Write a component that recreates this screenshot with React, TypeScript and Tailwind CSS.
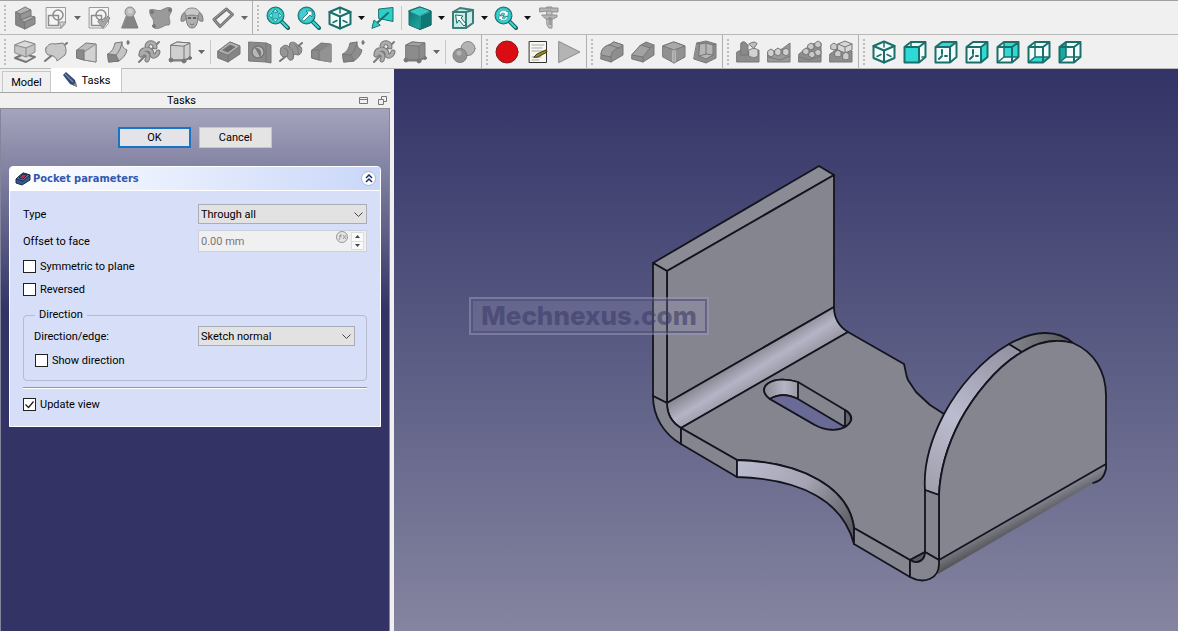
import type { ReactNode } from "react";
import clsx from "clsx";

/* ---------- icons ---------- */

interface IconProps {
  children: ReactNode;
  tone?: "gray" | "teal";
}

function Icon({ children, tone = "gray" }: IconProps) {
  return (
    <svg
      viewBox="0 0 24 24"
      className="h-6 w-6"
      fill={tone === "teal" ? "#2bcfca" : "#a2a2a2"}
      stroke={tone === "teal" ? "#1a6f6b" : "#777"}
      strokeWidth={1}
      strokeLinejoin="round"
      strokeLinecap="round"
      aria-hidden="true"
    >
      {children}
    </svg>
  );
}

const BodyIcon = () => (
  <Icon>
    <path d="m3 6 5 2v6l4 2v7l-9-4Z" fill="#868686" />
    <path d="m3 6 9-5 6 3-10 4Z" fill="#b2b2b2" />
    <path d="m8 8 10-4v6L8 14Z" fill="#959595" />
    <path d="m8 14 10-4 4 1-10 5Z" fill="#b2b2b2" />
    <path d="m12 16 10-5v7l-10 5Z" fill="#8f8f8f" />
  </Icon>
);

const SketchIcon = ({ check = false }: { check?: boolean }) => (
  <Icon>
    <path d="M2.500 1.500h19v16l-4 4.500h-15Z" fill="#f4f4f4" stroke="#9a9a9a" />
    <path d="M4.500 9.500h10v10h-10Z" fill="none" stroke="#8c8c8c" strokeWidth={1.500} />
    <circle cx="14" cy="9" r="5" fill="none" stroke="#8c8c8c" strokeWidth={1.500} />
    {check ? (
      <path d="m11 15 3-2 2 3 5-6 2 2-7 10Z" fill="#a6a6a6" stroke="#888" />
    ) : (
      <path d="M16 16h5l-4 6Z" fill="#d2d2d2" stroke="#999" />
    )}
  </Icon>
);

const AttachIcon = () => (
  <Icon>
    <path d="M9 9h6l5 13H4Z" fill="#858585" stroke="#7c7c7c" />
    <circle cx="12" cy="6" r="5" fill="#bababa" stroke="#8c8c8c" />
    <circle cx="12" cy="5" r="2.500" fill="#cfcfcf" stroke="none" />
  </Icon>
);

const BinderIcon = () => (
  <Icon>
    <path d="M1 4c4-2 7 2 12 0 3-2 6-3 9-2 2 4-2 6-2 9s2 5 0 8c-5-1-8 5-15 3-2-3 1-5-1-9C2 10 0 8 1 4Z" fill="#9a9a9a" stroke="#858585" />
    <circle cx="3" cy="6" r="1.500" fill="#7a7a7a" />
    <circle cx="21" cy="4" r="1.500" fill="#7a7a7a" />
    <circle cx="5" cy="20" r="1.500" fill="#7a7a7a" />
  </Icon>
);

const CloneIcon = () => (
  <Icon>
    <path d="M6 6C3 6 1 9 1 15c3 1 5-1 6-4M18 6c3 0 5 3 5 9-3 1-5-1-6-4" fill="#a2a2a2" />
    <path d="M6 9h12c0 6-1 13-6 13S6 15 6 9Z" fill="#b0b0b0" />
    <path d="M5 8c-1-4 3-6 7-6s8 2 7 6c-2 3-4 1-7 1S7 11 5 8Z" fill="#c9c9c9" stroke="#888" />
    <path d="M8.500 12h2M13.500 12h2" stroke="#444" strokeWidth={1.500} />
    <path d="m10 18 2 1 2-1" fill="none" />
  </Icon>
);

const PlaneIcon = () => (
  <Icon>
    <path d="M15.500 3 21.500 8.500 9 20.500 3 13.500Z" fill="#f2f2f2" stroke="#6f6f6f" strokeWidth={3} />
    <path d="M15.500 3 21.500 8.500 9 20.500 3 13.500Z" fill="none" stroke="#a4a4a4" />
  </Icon>
);

const PadIcon = () => (
  <Icon>
    <path d="m2 18 9-4 11 3-9 5Z" fill="#e2e2e2" stroke="#777" strokeWidth={2} />
    <path d="m2 5 10-4 10 3v8l-9 5-11-4Z" fill="#c4c4c4" stroke="#8a8a8a" />
    <path d="m2 5 11 3 9-4-10-3Z" fill="#dadada" stroke="#8a8a8a" />
    <path d="M13 8v9" stroke="#8a8a8a" />
  </Icon>
);

const RevolveIcon = ({ dark = false }: { dark?: boolean }) => (
  <Icon>
    <path d="M1 21 23 3" stroke="#777" strokeWidth={2} />
    {dark ? (
      <>
        <path d="M2 8c2-3 6-4 8-1l1-4c3-2 7 0 8 3l3 1c2 3 0 8-3 8l-4-1-1 5c-3 3-5 0-6-3l-3 1c-3 0-5-5-3-9Z" fill="#959595" />
        <path d="M5 8c4 1 5 4 3 8M10 7c4 2 5 6 4 11M16 5c3 2 4 6 3 9" fill="none" />
      </>
    ) : (
      <path d="M2 8c2-4 6-5 9-4l8-1c3 3 4 8 2 12l-8 6c-1-4-4-6-9-6-2-2-3-4-2-7Z" fill="#c9c9c9" stroke="#7c7c7c" />
    )}
  </Icon>
);

const LoftIcon = ({ dark = false }: { dark?: boolean }) => (
  <Icon>
    <path d="m2 10 9-7 10 1v18L9 20l-7-2Z" fill={dark ? "#868686" : "#bdbdbd"} />
    <path d="m9 12 12-8v18L9 20Z" fill={dark ? "#939393" : "#d2d2d2"} stroke="#8a8a8a" />
    <path d="M2 10h7v10l-7-2Z" fill="#8a8a8a" />
  </Icon>
);

const SweepIcon = ({ dark = false }: { dark?: boolean }) => (
  <Icon>
    <path d="M2 14c4-2 6-6 7-11l7-1c0 4 1 6 5 8-1 5-4 8-8 11l-10 1Z" fill={dark ? "#8d8d8d" : "#c4c4c4"} />
    <path d="m2 14 8 1 3 6-10 1Z" fill="#858585" />
    <path d="M10 15c3-3 5-7 6-13" fill="none" />
    <ellipse cx="22" cy="2.500" rx="1" ry="2" fill="#777" />
  </Icon>
);

const HelixIcon = () => (
  <Icon>
    <path d="M2 22 22 2" stroke="#7a7a7a" strokeWidth={2} />
    <path d="M4 15c4-4 9-1 6 5M4 15c-1-7 11-8 11-1 0 4 5 2 6-2M10 6c1-5 8-4 8 1" fill="none" stroke="#777" strokeWidth={5} />
    <path d="M4 15c4-4 9-1 6 5M4 15c-1-7 11-8 11-1 0 4 5 2 6-2M10 6c1-5 8-4 8 1" fill="none" stroke="#ababab" strokeWidth={3} />
  </Icon>
);

const PrimitiveIcon = ({ dark = false }: { dark?: boolean }) => (
  <Icon>
    <path d="m3 5 6-3 13 1v15l-6 3H3Z" fill={dark ? "#8c8c8c" : "#cfcfcf"} />
    <path d="m3 5 6-3 13 1-6 3Z" fill={dark ? "#a2a2a2" : "#dedede"} />
    <path d="M16 6v15" />
    <path d="M3 20h13l6-2" fill="none" strokeWidth={1.500} />
    <circle cx="3" cy="20" r="2" fill="#777" />
    <circle cx="16" cy="21" r="2" fill="#777" />
    <circle cx="22" cy="18" r="1.500" fill="#777" />
  </Icon>
);

const PocketIcon = () => (
  <Icon>
    <path d="m1 11 12-9 10 4v8L11 22 1 18Z" fill="#858585" />
    <path d="m1 11 12-9 10 4-12 9Z" fill="#b2b2b2" />
    <path d="m6 10 7-5 5 2-7 5Z" fill="#6d6d6d" />
    <path d="M11 15v7" />
  </Icon>
);

const HoleIcon = () => (
  <Icon>
    <path d="m1 2 17 1 5 2v18l-5-1-17-1Z" fill="#8a8a8a" />
    <path d="M18 3v19" />
    <circle cx="10" cy="12" r="6" fill="#b9b9b9" strokeWidth={1.500} />
    <path d="M7 8c5 0 7 4 5 9" fill="#777" />
  </Icon>
);

const BooleanIcon = () => (
  <Icon>
    <circle cx="16" cy="8.500" r="7" fill="#b3b3b3" stroke="#888" />
    <circle cx="8" cy="15.500" r="7" fill="#939393" stroke="#7f7f7f" />
    <circle cx="7" cy="13" r="2.500" fill="#b5b5b5" stroke="none" />
  </Icon>
);

const MacroEditIcon = () => (
  <Icon>
    <path d="M3.500 1.500h17v21h-17Z" fill="#f7f7f2" stroke="#333" />
    <path d="M6 5h12M6 8h10M6 11h12M6 17h9M6 20h7" fill="none" stroke="#a5a5a5" />
    <path d="m8 17 3-3 9-4 1 2-9 5Z" fill="#a18c1f" stroke="#3d3510" />
  </Icon>
);

const FilletIcon = () => (
  <Icon>
    <path d="M1 15c0-5 3-9 8-10l5-3 9 3v10l-12 7-10-3Z" fill="#8e8e8e" />
    <path d="M9 5c-5 1-8 5-8 10l10 2c0-5 3-8 8-9l4-3-9-3Z" fill="#a0a0a0" />
    <path d="M11 17v5M9 5l10 3" fill="none" />
  </Icon>
);

const ChamferIcon = () => (
  <Icon>
    <path d="m1 15 9-10 5-3 8 3v10l-11 7-11-3Z" fill="#8e8e8e" />
    <path d="m1 15 11 2 7-9-9-3Z" fill="#a3a3a3" />
    <path d="M12 17v5M19 8l4-3" fill="none" />
  </Icon>
);

const DraftIcon = () => (
  <Icon>
    <path d="m1 6 11-4 11 4v11l-11 6-11-6Z" fill="#919191" />
    <path d="m1 6 11 4 11-4-11-4Z" fill="#a9a9a9" />
    <path d="M12 11v10" stroke="#ddd" strokeWidth={3} />
    <path d="M12 10v13" />
  </Icon>
);

const ThicknessIcon = () => (
  <Icon>
    <path d="m4 3 9-2 10 3v14l-10 5-12-4Z" fill="#8d8d8d" />
    <path d="m7 4 6-1 7 2v10l-7 4-7-3Z" fill="#b5b5b5" />
    <path d="M13 3v11l-7 2M13 14l7 1M7 4 4 3M20 5l3-1" fill="none" />
  </Icon>
);

const PatternIcon = ({ kind }: { kind: "mirror" | "linear" | "polar" | "multi" }) => (
  <Icon>
    {kind === "mirror" && (
      <>
        <path d="M1 12 7 9l5 3 11-2v12H1Z" fill="#8c8c8c" />
        <path d="M5 3c3-3 5 0 7 2v10H5Z" fill="#8a8a8a" />
        <path d="M13 4c4-3 8-2 8 0l-3 4Z" fill="#bdbdbd" />
        <path d="M13 10c3-2 7-2 9 0v6c-3 2-6 2-9 0Z" fill="#d2d2d2" />
      </>
    )}
    {kind === "linear" && (
      <>
        <path d="m1 13 14-4 8-6v19H1Z" fill="#999" />
        <path d="m1 11 3-2 3 2v4l-3 2-3-2ZM8 10l3-2 3 2v4l-3 2-3-2ZM16 10l3-2 3 2v4l-3 2-3-2Z" fill="#d0d0d0" />
        <path d="m1 17 12 3 10-4" fill="none" />
      </>
    )}
    {kind === "polar" && (
      <>
        <path d="m1 14 13-10 9-1v19H1Z" fill="#8d8d8d" />
        <path d="m5 10 3-2 3 2v3l-3 2-3-2ZM10 5l3-2 3 2v3l-3 2-3-2ZM17 3l3-2 3 2v3l-3 2-3-2ZM17 11l3-2 3 2v3l-3 2-3-2ZM11 13l3-2 3 2v3l-3 2-3-2Z" fill="#c9c9c9" />
        <path d="m1 17 10 3 12-4" fill="none" />
      </>
    )}
    {kind === "multi" && (
      <>
        <path d="M1 14 8 9l15 2v11H1Z" fill="#8d8d8d" />
        <path d="m9 4 7-3 7 3v6l-7 3-7-3Z" fill="#d6d6d6" />
        <path d="m9 4 7 3 7-3M16 7v6" fill="none" />
        <path d="m2 5 3-2 3 2v4l-3 1-3-1ZM6 12l3-2 3 2v4l-3 1-3-1ZM14 14l3-2 3 2v5l-3 1-3-1Z" fill="#cbcbcb" />
      </>
    )}
  </Icon>
);

const Lens = ({ children }: { children: ReactNode }) => (
  <Icon tone="teal">
    <path d="m15 15 7 7" stroke="#12615d" strokeWidth={4} />
    <path d="m15.500 15.500 6 6" stroke="#35d8d3" strokeWidth={2} />
    <circle cx="9.500" cy="9.500" r="7.500" fill="#37cfd0" stroke="#1a6f6b" strokeWidth={3} />
    <circle cx="9.500" cy="9.500" r="7.500" fill="#43cdd2" stroke="#25c4bf" strokeWidth={1} />
    {children}
  </Icon>
);

const FitAllIcon = () => (
  <Lens>
    <path d="M9.500 3.500 12 6H7ZM9.500 15.500 12 13H7ZM3.500 9.500 6 7v5ZM15.500 9.500 13 7v5Z" fill="#fff" strokeWidth={0.800} />
  </Lens>
);

const FitSelectionIcon = () => (
  <Lens>
    <path d="m5 13 6-6-2-2h6v6l-2-2-6 6Z" fill="#fff" strokeWidth={0.800} />
  </Lens>
);

const SyncViewIcon = () => (
  <Lens>
    <path d="M5 8c1-4 6-5 8-2l1-1v5H9l2-2c-2-2-4-1-4 1ZM14 11c-1 4-6 5-8 2l-1 1v-4h5l-2 2c2 2 3 1 4-1Z" fill="#fff" strokeWidth={0.500} />
  </Lens>
);

const IsoIcon = () => (
  <Icon tone="teal">
    <path d="M12 1.500 22.500 6v12L12 22.500 1.500 18V6Z" fill="#f4fbfb" strokeWidth={2} />
    <path d="M1.500 6 12 10.500 22.500 6M12 10.500v12" fill="none" strokeWidth={2} />
    <path d="M12 2v5M5 16.500l4-2M19 16.500l-4-2" fill="none" strokeWidth={1.500} />
  </Icon>
);

const AlignIcon = () => (
  <Icon tone="teal">
    <path d="m8 3 14-1.500v14L8 12.500Z" />
    <path d="M17 7 6 17" strokeWidth={2} />
    <path d="m1 22 2-8 6 5Z" />
  </Icon>
);

const DrawStyleIcon = () => (
  <Icon tone="teal">
    <defs>
      <linearGradient id="cube" x1="0" x2="1" y1="0" y2="1">
        <stop offset="0" stopColor="#0c6b69" />
        <stop offset="1" stopColor="#2cc4be" />
      </linearGradient>
    </defs>
    <path d="M12 1 23 5v14l-11 4.500L1 19V5Z" fill="url(#cube)" />
    <path d="m1 5 11-4 11 4-11 5Z" fill="#38c9c4" />
    <path d="m12 10 11-5v14l-11 4.500Z" fill="#0f7876" />
    <path d="m3 6 9 4 9-4M12 10v12" fill="none" stroke="#4fe0da" strokeWidth={0.500} />
  </Icon>
);

const SelectBoxIcon = () => (
  <Icon tone="teal">
    <path d="m2 6 7-4 13 2v13l-7 5H2Z" fill="#c7ecea" stroke="#3d7d7a" strokeWidth={2} />
    <path d="M2 6h13v16M15 6l7-2" fill="none" stroke="#3d7d7a" strokeWidth={2} />
    <path d="m5 9 7 1-2 2 5 6-2 2-5-6-2 3Z" fill="#fff" />
  </Icon>
);

const CaliperIcon = () => (
  <Icon>
    <path d="M10 1h5v21h-3l-2-3Z" fill="#c2c2c2" stroke="#8e8e8e" />
    <path d="M3 2h18v4h-5l-2-1h-4L3 6ZM5 9h15v2l-4 2H9Z" fill="#b5b5b5" stroke="#8e8e8e" />
    <path d="M12 12h2M12 14h2M12 16h2M12 18h2" stroke="#777" />
  </Icon>
);

const FACES = {
  front: "M1.500 7h14.500v15.500H1.500Z",
  top: "M1.500 7 8 2h14.500L16 7Z",
  right: "M16 7l6.500-5v15L16 22.500Z",
  rear: "M8 2h14.500v15H8Z",
  bottom: "M1.500 22.500 8 17h14.500L16 22.500Z",
  left: "M1.500 7 8 2v15l-6.500 5.500Z",
};

const ViewIcon = ({ face }: { face: keyof typeof FACES }) => (
  <Icon tone="teal">
    <path d="M1.500 7 8 2h14.500v15L16 22.500H1.500Z" fill="#f2fbfb" stroke="none" />
    <path d={FACES[face]} fill={face === "left" ? "#17a8a4" : "#2fd9d6"} stroke="none" />
    {face === "front" && <path d="M8 2v5M22 17l-3 0" fill="none" strokeWidth={1.500} />}
    {(face === "top" || face === "right") && (
      <path d="M8 10v4M5 19l3-3M13 16h-2" fill="none" strokeWidth={2} />
    )}
    {face !== "front" && face !== "top" && face !== "right" && (
      <path d="M8 2v15h14M8 17l-6 5" fill="none" strokeWidth={1.500} />
    )}
    <path d="M1.500 7 8 2h14.500v15L16 22.500H1.500ZM1.500 7H16v15.500M16 7l6.500-5" fill="none" strokeWidth={2} />
  </Icon>
);

/* ---------- toolbar ---------- */

function Tool({ label, children }: { label: string; children: ReactNode }) {
  return (
    <button type="button" aria-label={label} className="flex h-8 w-[31px] shrink-0 items-center justify-center">
      {children}
    </button>
  );
}

function Caret({ label, dim = false }: { label: string; dim?: boolean }) {
  return (
    <button type="button" aria-label={label} className="flex h-8 w-3 shrink-0 items-center justify-center">
      <svg viewBox="0 0 7 4" className={clsx("h-1 w-[7px]", dim ? "fill-[#666]" : "fill-[#111]")}>
        <path d="M0 0h7L3.500 4Z" />
      </svg>
    </button>
  );
}

const Divider = () => (
  <div className="flex h-8 w-1.5 shrink-0 justify-center py-1">
    <div className="w-px bg-[#c8c8c8]" />
  </div>
);

function ToolGroup({ children, last = false }: { children: ReactNode; last?: boolean }) {
  return (
    <div className={clsx("flex h-full shrink-0 items-center pr-0.5", !last && "border-r border-[#b0b0b0]")}>
      <div className="ml-1 mr-[3px] h-[26px] w-0.5 border-l-2 border-dotted border-[#bdbdbd]" />
      {children}
    </div>
  );
}

function Toolbars() {
  return (
    <header className="border-t border-[#a0a0a0] bg-[#f0f0f0]">
      <div className="flex h-[34px] overflow-hidden border-b border-[#b8b8b8]">
        <ToolGroup>
          <Tool label="Create body"><BodyIcon /></Tool>
          <Tool label="Create sketch"><SketchIcon /></Tool>
          <Caret label="Sketch menu" dim />
          <Tool label="Validate sketch"><SketchIcon check /></Tool>
          <Tool label="Check geometry"><AttachIcon /></Tool>
          <Tool label="Sub-shape binder"><BinderIcon /></Tool>
          <Tool label="Clone"><CloneIcon /></Tool>
          <Tool label="Datum plane"><PlaneIcon /></Tool>
          <Caret label="Datum menu" dim />
        </ToolGroup>
        <ToolGroup last>
          <Tool label="Fit all"><FitAllIcon /></Tool>
          <Tool label="Fit selection"><FitSelectionIcon /></Tool>
          <Tool label="Isometric"><IsoIcon /></Tool>
          <Caret label="Views menu" />
          <Tool label="Align to selection"><AlignIcon /></Tool>
          <Divider />
          <Tool label="Draw style"><DrawStyleIcon /></Tool>
          <Caret label="Draw style menu" />
          <Tool label="Selection box"><SelectBoxIcon /></Tool>
          <Caret label="Selection menu" />
          <Tool label="Sync view"><SyncViewIcon /></Tool>
          <Caret label="Sync menu" />
          <Tool label="Measure"><CaliperIcon /></Tool>
        </ToolGroup>
      </div>

      <div className="flex h-[34px] overflow-hidden border-b border-[#b8b8b8]">
        <ToolGroup>
          <Tool label="Pad"><PadIcon /></Tool>
          <Tool label="Revolution"><RevolveIcon /></Tool>
          <Tool label="Additive loft"><LoftIcon /></Tool>
          <Tool label="Additive pipe"><SweepIcon /></Tool>
          <Tool label="Additive helix"><HelixIcon /></Tool>
          <Tool label="Additive box"><PrimitiveIcon /></Tool>
          <Caret label="Additive menu" dim />
          <Divider />
          <Tool label="Pocket"><PocketIcon /></Tool>
          <Tool label="Hole"><HoleIcon /></Tool>
          <Tool label="Groove"><RevolveIcon dark /></Tool>
          <Tool label="Subtractive loft"><LoftIcon dark /></Tool>
          <Tool label="Subtractive pipe"><SweepIcon dark /></Tool>
          <Tool label="Subtractive helix"><HelixIcon /></Tool>
          <Tool label="Subtractive box"><PrimitiveIcon dark /></Tool>
          <Caret label="Subtractive menu" dim />
          <Divider />
          <Tool label="Boolean"><BooleanIcon /></Tool>
        </ToolGroup>
        <ToolGroup>
          <Tool label="Record macro">
            <Icon><circle cx="12" cy="12" r="11" fill="#d90d12" stroke="#8d1a1c" /></Icon>
          </Tool>
          <Tool label="Macros"><MacroEditIcon /></Tool>
          <Tool label="Run macro">
            <Icon><path d="M2 1.500 23 12 2 22.500Z" fill="#b4b4b4" stroke="#8c8c8c" /></Icon>
          </Tool>
        </ToolGroup>
        <ToolGroup>
          <Tool label="Fillet"><FilletIcon /></Tool>
          <Tool label="Chamfer"><ChamferIcon /></Tool>
          <Tool label="Draft"><DraftIcon /></Tool>
          <Tool label="Thickness"><ThicknessIcon /></Tool>
        </ToolGroup>
        <ToolGroup>
          <Tool label="Mirrored"><PatternIcon kind="mirror" /></Tool>
          <Tool label="Linear pattern"><PatternIcon kind="linear" /></Tool>
          <Tool label="Polar pattern"><PatternIcon kind="polar" /></Tool>
          <Tool label="Multi transform"><PatternIcon kind="multi" /></Tool>
        </ToolGroup>
        <ToolGroup last>
          <Tool label="Axonometric"><IsoIcon /></Tool>
          <Tool label="Front view"><ViewIcon face="front" /></Tool>
          <Tool label="Top view"><ViewIcon face="top" /></Tool>
          <Tool label="Right view"><ViewIcon face="right" /></Tool>
          <Tool label="Rear view"><ViewIcon face="rear" /></Tool>
          <Tool label="Bottom view"><ViewIcon face="bottom" /></Tool>
          <Tool label="Left view"><ViewIcon face="left" /></Tool>
        </ToolGroup>
      </div>
    </header>
  );
}

/* ---------- task panel ---------- */

function Combo({ id, value }: { id: string; value: string }) {
  return (
    <div className="relative flex-1">
      <select
        id={id}
        defaultValue={value}
        className="block h-5 w-full appearance-none border border-[#a9adb8] bg-[#e2e2e2] px-0.5 pt-px text-[11px] leading-4 text-black"
      >
        <option>{value}</option>
      </select>
      <svg viewBox="0 0 9 5" className="pointer-events-none absolute right-1 top-2 h-[5px] w-[9px]" fill="none" stroke="#444">
        <path d="m.5.5 4 4 4-4" />
      </svg>
    </div>
  );
}

function Check({ label, checked = false }: { label: string; checked?: boolean }) {
  return (
    <label className="flex h-[13px] items-center gap-1">
      <span className="relative flex h-[13px] w-[13px]">
        <input type="checkbox" defaultChecked={checked} className="peer h-[13px] w-[13px] appearance-none border border-[#222] bg-white" />
        <svg viewBox="0 0 13 13" className="pointer-events-none absolute inset-0 hidden peer-checked:block" fill="none" stroke="#222" strokeWidth={1.300}>
          <path d="m2.500 6.500 3 3 5-6" />
        </svg>
      </span>
      <span className="pt-px">{label}</span>
    </label>
  );
}

function PocketParameters() {
  return (
    <section className="overflow-hidden rounded-t border border-white bg-[#d6dff7]">
      <div className="flex h-6 items-center gap-0.5 border-b border-white bg-linear-to-r from-white to-[#c9d7f9] pl-[5px] pr-1">
        <svg viewBox="0 0 16 14" className="h-3.5 w-4" stroke="#222c4a" strokeLinejoin="round">
          <path d="m1 7 7-6 7 2v5l-8 5-6-2Z" fill="#31578f" />
          <path d="m1 7 7-6 7 2-7 6Z" fill="#5575a8" />
          <path d="m4 6 4-4 4 1-4 4Z" fill="#c5283a" />
        </svg>
        <h2 className="flex-1 pt-0.5 font-['DejaVu_Sans_Condensed','DejaVu_Sans',sans-serif] text-[11px] font-bold text-[#3159b0]">Pocket parameters</h2>
        <button type="button" aria-label="Collapse" className="flex h-[15px] w-[15px] items-center justify-center rounded-full border border-[#a9b4cf] bg-white">
          <svg viewBox="0 0 8 9" className="h-[9px] w-2" fill="none" stroke="#1b2f6b" strokeWidth={1.500}>
            <path d="m1 4 3-3 3 3M1 8l3-3 3 3" />
          </svg>
        </button>
      </div>

      <div className="px-[13px] pb-[15px] pt-3">
        <div className="flex h-[22px] items-center">
          <label htmlFor="type" className="w-[175px] pt-0.5">Type</label>
          <Combo id="type" value="Through all" />
        </div>
        <div className="mt-1 flex h-6 items-center">
          <label htmlFor="offset" className="w-[175px] pt-0.5">Offset to face</label>
          <div className="flex h-[22px] flex-1 items-center border border-[#ccd0dc] bg-[#f0f0f0] pr-0.5">
            <input id="offset" disabled defaultValue="0.00 mm" className="w-0 flex-1 px-0.5 pt-0.5 text-[11px] text-[#777]" />
            <svg viewBox="0 0 12 12" className="mb-2 mr-[3px] h-3 w-3" fill="none" stroke="#999">
              <circle cx="6" cy="6" r="5.500" fill="#e4e4e4" />
              <path d="M3 9c1-1 1-4 2-6M3 5h3M7 4l3 4M10 4 7 8" />
            </svg>
            <div className="flex h-[18px] w-[13px] flex-col border border-[#ddd] bg-[#fafafa]">
              <button type="button" disabled aria-label="Increase" className="flex flex-1 items-center justify-center border-b border-[#ddd]">
                <svg viewBox="0 0 5 3" className="h-[3px] w-[5px] fill-[#444]"><path d="M0 3h5L2.500 0Z" /></svg>
              </button>
              <button type="button" disabled aria-label="Decrease" className="flex flex-1 items-center justify-center">
                <svg viewBox="0 0 5 3" className="h-[3px] w-[5px] fill-[#444]"><path d="M0 0h5L2.500 3Z" /></svg>
              </button>
            </div>
          </div>
        </div>
        <div className="mt-[7px] flex flex-col gap-2.5">
          <Check label="Symmetric to plane" />
          <Check label="Reversed" />
        </div>

        <fieldset className="mt-[11px] rounded-sm border border-[#b5bccf] pb-[13px] pl-2.5 pr-[11px]">
          <legend className="ml-px h-4 px-1 leading-4">Direction</legend>
          <div className="mt-0.5 flex h-[22px] items-center">
            <label htmlFor="edge" className="w-[164px] pt-0.5">Direction/edge:</label>
            <Combo id="edge" value="Sketch normal" />
          </div>
          <div className="mt-[7px] pl-px">
            <Check label="Show direction" />
          </div>
        </fieldset>

        <hr className="mt-1.5 h-0.5 border-b border-t border-b-white border-t-[#8a95b5]" />
        <div className="mt-[9px]">
          <Check label="Update view" checked />
        </div>
      </div>
    </section>
  );
}

function TaskPanel() {
  return (
    <aside className="flex w-[394px] shrink-0 flex-col bg-[#f0f0f0] pr-1">
      <div className="flex h-6 items-end border-b border-[#a6a6a6]" role="tablist">
        <button type="button" role="tab" className="ml-0.5 h-[21px] w-[49px] border border-b-0 border-[#c8c8c8] bg-[#f0f0f0] pt-0.5">Model</button>
        <button type="button" role="tab" aria-selected="true" className="flex h-6 w-[71px] items-center justify-center gap-1 border-r border-[#c8c8c8] bg-white">
          <svg viewBox="0 0 16 16" className="h-4 w-4">
            <path d="M1 3 4 0l9 8 2 7-7-3Z" fill="#34496f" />
            <path d="m3 2 8 8" stroke="#6f88b5" strokeWidth={1.500} />
            <path d="m11 13 4 2-1-5Z" fill="#8f8270" />
          </svg>
          <span className="pt-0.5">Tasks</span>
        </button>
      </div>
      <div className="flex h-4 items-center border-b border-[#8b8b93] pr-[3px] leading-none">
        <h1 className="flex-1 pl-1 text-center">Tasks</h1>
        <div className="flex gap-2.5">
          <button type="button" aria-label="Dock">
            <svg viewBox="0 0 9 9" className="h-[9px] w-[9px]" fill="none" stroke="#777"><path d="M.5 1.500h8v6h-8ZM.5 3.500h8" /></svg>
          </button>
          <button type="button" aria-label="Float">
            <svg viewBox="0 0 9 9" className="h-[9px] w-[9px]" fill="none" stroke="#777"><path d="M.5 3.500h5v5h-5ZM3.500 3V.5h5v5H6" /></svg>
          </button>
        </div>
      </div>

      <div className="flex-1 border-x border-[#84849c] bg-[#333366] bg-[linear-gradient(#a4a4bc,#333366_200px)] px-2 pt-[18px]">
        <div className="mb-[18px] flex justify-center gap-2">
          <button type="button" className="h-[21px] w-[73px] border-2 border-[#1874c4] bg-[#e4e4e8] pt-px">OK</button>
          <button type="button" className="h-[21px] w-[73px] border border-[#c4c4cc] bg-[#e4e4e4] pt-px">Cancel</button>
        </div>
        <PocketParameters />
      </div>
    </aside>
  );
}

/* ---------- 3D view ---------- */

function Bracket() {
  return (
    <svg viewBox="394 69 784 562" className="absolute inset-0 h-full w-full" role="img" aria-label="Sheet metal bracket">
      <defs>
        <linearGradient id="bend" gradientUnits="userSpaceOnUse" x1="750" y1="355" x2="766" y2="381">
          <stop offset="0" stopColor="#8c8c98" />
          <stop offset=".5" stopColor="#b4b4c6" />
          <stop offset="1" stopColor="#9999a6" />
        </linearGradient>
        <linearGradient id="arc" gradientUnits="userSpaceOnUse" x1="737" y1="465" x2="854" y2="535">
          <stop offset="0" stopColor="#bcbccf" />
          <stop offset=".5" stopColor="#a4a4b4" />
          <stop offset="1" stopColor="#55555a" />
        </linearGradient>
        <linearGradient id="rim" gradientUnits="userSpaceOnUse" x1="930" y1="490" x2="1015" y2="345">
          <stop offset="0" stopColor="#a0a0ae" />
          <stop offset=".45" stopColor="#bcbcd0" />
          <stop offset="1" stopColor="#9090a0" />
        </linearGradient>
        <linearGradient id="rimEnd" x1="0" x2="1">
          <stop offset="0" stopColor="#84848c" />
          <stop offset="1" stopColor="#55585a" />
        </linearGradient>
        <linearGradient id="under" gradientUnits="userSpaceOnUse" x1="1020" y1="513" x2="1028" y2="528">
          <stop offset="0" stopColor="#82828c" />
          <stop offset="1" stopColor="#4c4c50" />
        </linearGradient>
        <linearGradient id="slot" x1="0" x2="1">
          <stop offset="0" stopColor="#8c8c96" />
          <stop offset=".6" stopColor="#b4b4c4" />
          <stop offset="1" stopColor="#9a9aa6" />
        </linearGradient>
      </defs>

      <g fill="#858590" stroke="#14141f" strokeWidth={1.800} strokeLinejoin="round" strokeLinecap="round">
        {/* upright plate */}
        <path d="M653 263 819 166 834 175 667 271Z" fill="#8b8b95" />
        <path d="M667 271 834 175V307L667 403Z" />
        <path d="M653 263 667 271V403L653 396Z" fill="#83838e" />
        <path d="M667 403 834 307C834 319 840 327 848 332L681 428C671 422 667 414 667 403Z" fill="url(#bend)" />
        <path d="M653 396 667 403C667 414 671 422 681 428V444C664 434 653 417 653 396Z" />

        {/* base */}
        <path d="M681 428 848 332 904 364C906 372 906 376 908 380L916 392 930 405 944 414 960 540 925 552 910 560 854 528C849 488 803 462 737 460Z" />
        <path d="M681 428 737 460V477L681 444Z" />
        <path d="M737 460C803 462 849 488 854 528V544C843 502 803 479 737 477Z" fill="url(#arc)" />
        <path d="M854 528 910 560V577L854 544Z" />

        {/* slot */}
        <path d="M770 399C754 387 773 374 798 382L845 410C860 419 848 434 815 425Z" />
        <path d="M770 399C754 387 773 374 798 382V399C788 394 778 394 770 399Z" fill="url(#slot)" />
        <path d="M770 399C778 394 788 394 798 399L845 427C838 431 826 431 815 425Z" fill="#6a6a96" />
        <path d="M845 410C853 415 853 422 845 427Z" fill="#66666e" />

        {/* round plate */}
        <path d="M939 560 1106 464C1106 475 1102 481 1092 484L938 574Z" fill="url(#under)" stroke="none" />
        <path d="M1106 464V469C1104 477 1101 481 1093 483" fill="none" />
        <path d="M925 490C923 463 932 437 944 414C958 388 981 360 1009 344L1022 352C996 367 973 397 960 421C947 446 940 470 939 495Z" fill="url(#rim)" />
        <path d="M1009 344C1034 330 1057 329 1073 343C1052 338 1038 342 1022 352Z" fill="url(#rimEnd)" />
        <path d="M939 495C940 470 947 446 960 421C973 397 996 367 1022 352C1038 342 1055 338 1073 343C1094 352 1106 371 1106 396V464L939 560Z" />
        <path d="M925 490 939 495V560L925 552Z" />
        <path d="M910 560 925 552C925 560 918 565 910 560Z" fill="#5a5a60" />
        <path d="M910 560C918 565 925 560 925 552L939 560V564C939 578 925 585 910 577Z" />
      </g>
    </svg>
  );
}

export default function App() {
  return (
    <div className="relative flex min-h-screen flex-col bg-[#f0f0f0] font-['Roboto','Liberation_Sans',sans-serif] text-[11px] text-black">
      <Toolbars />
      <div className="flex flex-1">
        <TaskPanel />
        <main className="relative flex-1 bg-linear-to-b from-[#333366] to-[#8585a0]">
          <Bracket />
        </main>
      </div>

      {/* watermark */}
      <div className="pointer-events-none absolute inset-0 flex items-center justify-center">
        <div className="border-2 border-[#9c9cb8]/50">
          <div className="border-2 border-[#4a4a78]/60 bg-[#9c9cc0]/25 px-2 font-['Inter',sans-serif] text-[26px] font-extrabold leading-[30px] text-[#3c3c68]/60">
            Mechnexus.com
          </div>
        </div>
      </div>
    </div>
  );
}
